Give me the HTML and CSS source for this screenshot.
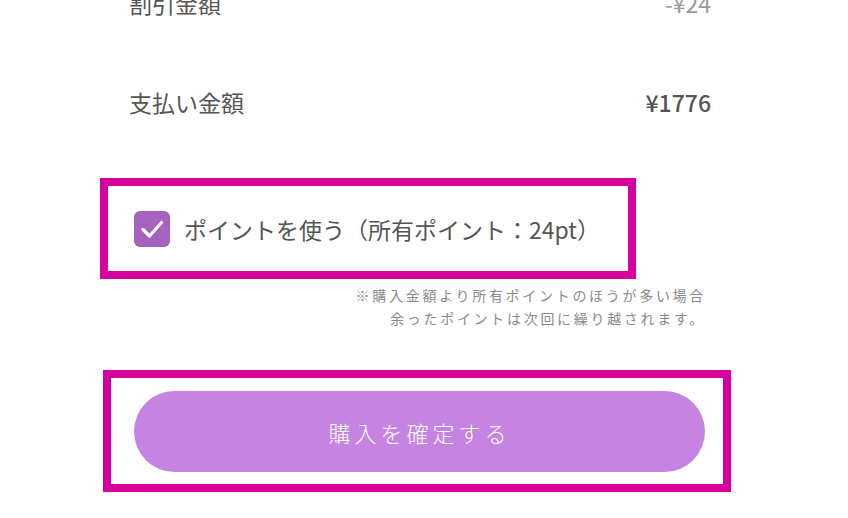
FILE: index.html
```html
<!DOCTYPE html>
<html lang="ja">
<head>
<meta charset="utf-8">
<link rel="stylesheet" href="styles.css">
</head>
<body>
<div class="page">
  <div class="summary">
    <div class="row">
      <span class="label">割引金額</span>
      <span class="value discount">-¥24</span>
    </div>
    <div class="row">
      <span class="label">支払い金額</span>
      <span class="value total">¥1776</span>
    </div>
  </div>

  <div class="hl hl-points">
    <label class="points">
      <span class="checkbox">
        <svg viewBox="0 0 36 36" width="36" height="36"><path d="M9 18.5 L15.5 25 L27.5 11.5" fill="none" stroke="#fff" stroke-width="3.2" stroke-linecap="round" stroke-linejoin="round"/></svg>
      </span>
      <span class="points-text">ポイントを使う（所有ポイント：24pt）</span>
    </label>
  </div>

  <p class="note">※購入金額より所有ポイントのほうが多い場合<br>余ったポイントは次回に繰り越されます。</p>

  <div class="hl hl-button">
    <button class="confirm">購入を確定する</button>
  </div>
</div>
</body>
</html>
```

FILE: styles.css
```css
* { box-sizing: border-box; }
html, body { margin: 0; padding: 0; background: #fff; }
body {
  width: 848px;
  height: 518px;
  overflow: hidden;
  font-family: "Noto Sans CJK JP", "Noto Sans", sans-serif;
  color: #555;
}
.page { display: flex; flex-direction: column; }

.summary {
  margin: -47px 137px 0 129px;
  display: flex;
  flex-direction: column;
}
.row {
  height: 99px;
  display: flex;
  align-items: center;
  justify-content: space-between;
  font-size: 23px;
}
.label { color: #555; }
.discount { color: #9a9a9a; }
.total { color: #555; font-weight: 500; }

.hl { border: 8px solid #d6009e; }

.hl-points {
  margin: 27px 0 0 100px;
  width: 536px;
  height: 101px;
  display: flex;
  align-items: center;
  padding-left: 26px;
}
.points { display: flex; align-items: center; gap: 14px; }
.checkbox {
  width: 36px;
  height: 36px;
  border-radius: 6px;
  background: #a363bf;
  display: flex;
}
.points-text { font-size: 23px; color: #555; }

.note {
  margin: 5px 142px 0 0;
  text-align: right;
  font-size: 14px;
  line-height: 23px;
  letter-spacing: 2.7px;
  color: #8a8a8a;
}

.hl-button {
  margin: 40px 0 0 103px;
  width: 628px;
  height: 122px;
  padding: 13px 18px 12px 23px;
}
.confirm {
  width: 571px;
  height: 81px;
  border: 0;
  border-radius: 41px;
  background: #c583e2;
  color: #fff;
  font-family: "Noto Sans CJK JP", "Noto Sans", sans-serif;
  font-size: 22px;
  font-weight: 300;
  letter-spacing: 4px;
  padding: 0;
}
```
